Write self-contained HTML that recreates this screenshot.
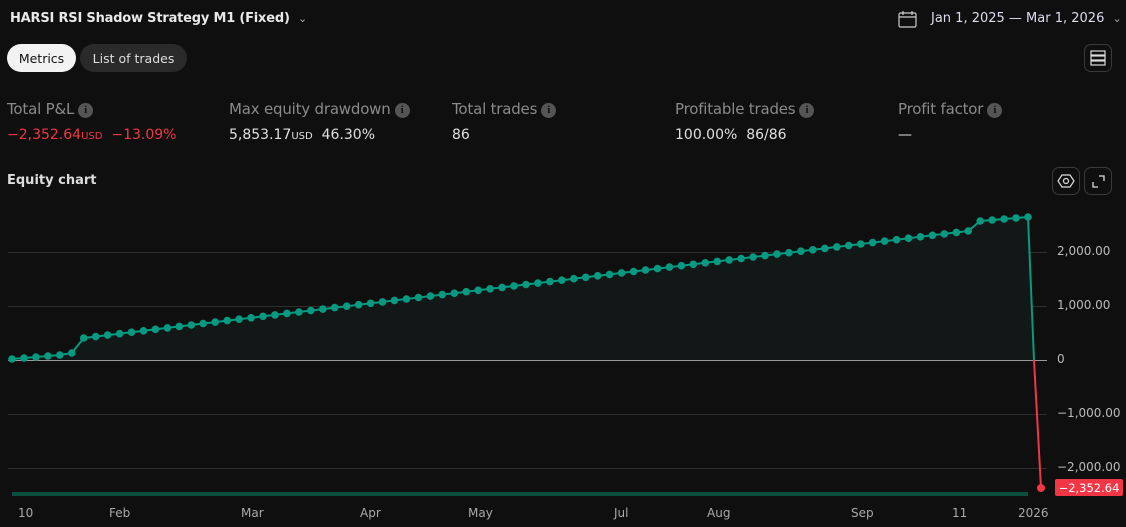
<!DOCTYPE html>
<html><head><meta charset="utf-8"><style>
*{margin:0;padding:0;box-sizing:border-box}
body{width:1126px;height:527px;background:#0f0f0f;font-family:"DejaVu Sans","Liberation Sans",sans-serif;color:#d1d4dc;position:relative;overflow:hidden}
.a{position:absolute;white-space:nowrap}
.title{left:10px;top:11px;font-size:13px;font-weight:bold;color:#e8e8e8;letter-spacing:-0.2px}
.pill{top:44px;height:28px;border-radius:14px;font-size:12.5px;line-height:29px;text-align:center}
.lbl{top:100px;font-size:15px;color:#8a8a8a;letter-spacing:-0.2px}
.val{top:127px;font-size:14px;color:#e0e0e0}
.i{display:inline-block;width:15px;height:15px;border-radius:50%;background:#555;color:#111;font-size:11px;font-weight:bold;text-align:center;line-height:15px;vertical-align:1px;margin-left:4px;font-family:"Liberation Serif",serif}
.usd{font-size:10px}
.btn{border:1px solid #3a3a3a;border-radius:7px;width:28px;height:28px}
.yl{left:1057px;font-size:12px;color:#bbb}
.xl{top:506px;font-size:12px;color:#aaa}
</style></head><body>
<div class="a title">HARSI RSI Shadow Strategy M1 (Fixed) <span style="font-weight:normal;color:#aaa;font-size:11px;margin-left:4px">&#8964;</span></div>
<svg class="a" style="left:898px;top:10px" width="19" height="19" viewBox="0 0 19 19" fill="none" stroke="#ccc" stroke-width="1.2"><rect x="1" y="3" width="17" height="14" rx="1.5"/><path d="M1 7h17M5 1v4M14 1v4"/></svg>
<div class="a" style="left:931px;top:11px;font-size:13px;color:#dde">Jan 1, 2025 — Mar 1, 2026 <span style="color:#aaa;font-size:11px;margin-left:4px">&#8964;</span></div>
<div class="a pill" style="left:7px;width:69px;background:#f2f2f2;color:#111">Metrics</div>
<div class="a pill" style="left:80px;width:107px;background:#2a2a2a;color:#ddd">List of trades</div>
<div class="a btn" style="left:1084px;top:44px"><svg width="26" height="26" viewBox="0 0 26 26" fill="none" stroke="#ddd" stroke-width="1.2"><rect x="6" y="6" width="14" height="4"/><rect x="6" y="11" width="14" height="4"/><rect x="6" y="16" width="14" height="4"/></svg></div>
<div class="a lbl" style="left:7px">Total P&amp;L<span class="i">i</span></div>
<div class="a lbl" style="left:229px">Max equity drawdown<span class="i">i</span></div>
<div class="a lbl" style="left:452px">Total trades<span class="i">i</span></div>
<div class="a lbl" style="left:675px">Profitable trades<span class="i">i</span></div>
<div class="a lbl" style="left:898px">Profit factor<span class="i">i</span></div>
<div class="a val" style="left:7px;color:#f23645">−2,352.64<span class="usd">USD</span>&nbsp; −13.09%</div>
<div class="a val" style="left:229px">5,853.17<span class="usd">USD</span>&nbsp; 46.30%</div>
<div class="a val" style="left:452px">86</div>
<div class="a val" style="left:675px">100.00%&nbsp; 86/86</div>
<div class="a val" style="left:898px">—</div>
<div class="a" style="left:7px;top:173px;font-size:13px;font-weight:bold;color:#ddd">Equity chart</div>
<div class="a btn" style="left:1052px;top:167px"><svg width="26" height="26" viewBox="0 0 26 26" fill="none" stroke="#ddd" stroke-width="1.2"><path d="M9 7h8l4 6-4 6H9l-4-6z"/><circle cx="13" cy="13" r="2.5"/></svg></div>
<div class="a btn" style="left:1084px;top:167px"><svg width="26" height="26" viewBox="0 0 26 26" fill="none" stroke="#ddd" stroke-width="1.3"><path d="M14 8h5v5M8 14v5h5"/></svg></div>
<svg class="a" style="left:0;top:0" width="1126" height="527" id="ch">
<g stroke="#2e2e2e" stroke-width="1"><line x1="8" y1="252.5" x2="1047" y2="252.5"/><line x1="8" y1="306.5" x2="1047" y2="306.5"/><line x1="8" y1="414.5" x2="1047" y2="414.5"/><line x1="8" y1="468.5" x2="1047" y2="468.5"/></g>
<line x1="8" y1="360.5" x2="1047" y2="360.5" stroke="#9a9a9a" stroke-width="1"/>
<path id="fill" fill="#121817"/>
<path id="ln" fill="none" stroke="#089981" stroke-width="2"/>
<line x1="1034" y1="360" x2="1041" y2="488" stroke="#f23645" stroke-width="2"/>
<g id="dots" fill="#089981"></g>
<circle cx="1041" cy="488" r="4" fill="#f23645"/>
<rect x="12" y="492" width="1016" height="4" fill="#0b4d3f"/>
<rect x="1055" y="479" width="68" height="17" rx="2" fill="#f23645"/>
<text x="1089" y="492" font-size="11.5" fill="#fff" text-anchor="middle" font-family="DejaVu Sans,sans-serif">−2,352.64</text>
</svg>
<div class="a yl" style="top:244px">2,000.00</div>
<div class="a yl" style="top:298px">1,000.00</div>
<div class="a yl" style="top:352px">0</div>
<div class="a yl" style="top:406px">−1,000.00</div>
<div class="a yl" style="top:460px">−2,000.00</div>
<div class="a xl" style="left:18px">10</div>
<div class="a xl" style="left:109px">Feb</div>
<div class="a xl" style="left:241px">Mar</div>
<div class="a xl" style="left:360px">Apr</div>
<div class="a xl" style="left:468px">May</div>
<div class="a xl" style="left:614px">Jul</div>
<div class="a xl" style="left:707px">Aug</div>
<div class="a xl" style="left:851px">Sep</div>
<div class="a xl" style="left:952px">11</div>
<div class="a xl" style="left:1018px">2026</div>
<script>
var ys=[359,358,357,356,355,353];
for(var i=6;i<=80;i++)ys.push(338-(i-6)*107/74);
ys.push(221,220,219,218,217);
var d='',dots='';
for(var i=0;i<86;i++){var x=12+i*1016/85;d+=(i?'L':'M')+x.toFixed(1)+' '+ys[i].toFixed(1);dots+='<circle cx="'+x.toFixed(1)+'" cy="'+ys[i].toFixed(1)+'" r="3.8"/>';}
document.getElementById('fill').setAttribute('d',d+'L1034 360L12 360Z');
document.getElementById('ln').setAttribute('d',d+'L1034 360');
document.getElementById('dots').innerHTML=dots;
</script>
</body></html>
